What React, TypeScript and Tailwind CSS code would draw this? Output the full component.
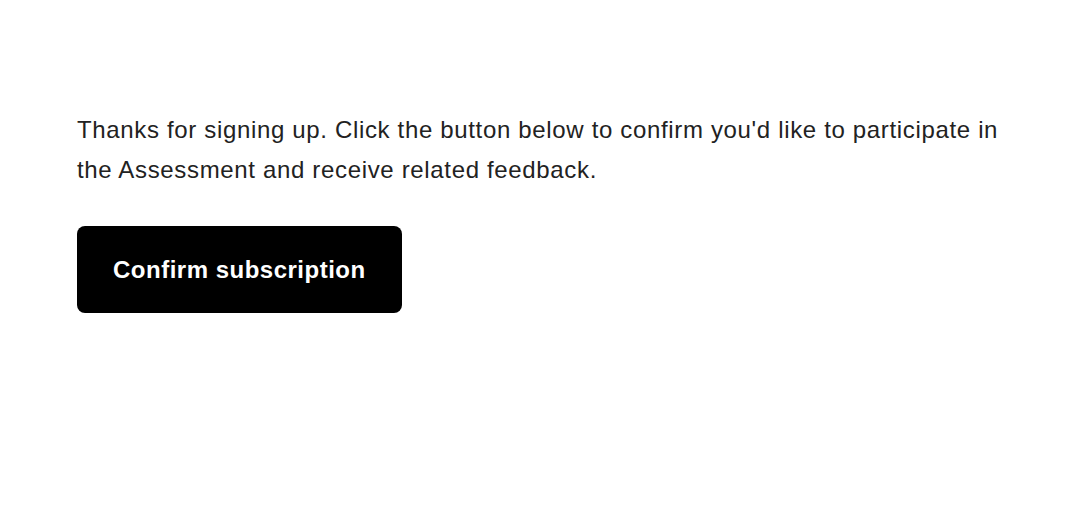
export default function App() {
  return (
    <div className="min-h-screen bg-white font-['Liberation_Sans',Arial,sans-serif]">
      <div className="pl-[77px] pt-[110px] w-[1030px]">
        <p className="text-[24px] leading-[40px] tracking-[0.66px] text-[#222222]">
          Thanks for signing up. Click the button below to confirm you'd like to participate in the Assessment and receive related feedback.
        </p>
        <button className="mt-[36px] h-[87px] px-[36px] rounded-lg bg-black text-white text-[24px] font-bold tracking-[0.5px]">
          Confirm subscription
        </button>
      </div>
    </div>
  );
}
